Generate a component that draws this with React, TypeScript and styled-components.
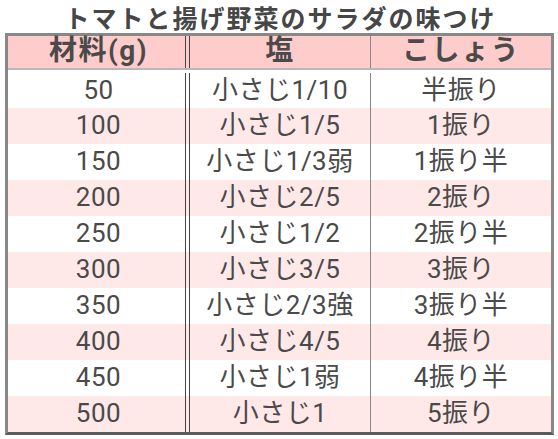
import React from 'react';
import styled, { createGlobalStyle } from 'styled-components';

const GlobalStyle = createGlobalStyle`
  * {
    box-sizing: border-box;
  }
  body {
    margin: 0;
    background: #ffffff;
    font-family: "Noto Sans CJK JP", "Noto Sans", sans-serif;
    color: #4a4a4a;
  }
`;

const Page = styled.div`
  width: 558px;
  height: 439px;
  display: flex;
  flex-direction: column;
  padding: 0 4px 0 5px;
`;

const Title = styled.h1`
  margin: 0;
  height: 33px;
  text-align: center;
  font-size: 25px;
  font-weight: 700;
  letter-spacing: 2px;
  line-height: 34px;
  padding-left: 2px;
  color: #464646;
`;

const Table = styled.div`
  display: flex;
  flex-direction: column;
  border: 3px solid #888888;
  border-bottom-color: #5a5a5a;
`;

const Row = styled.div<{ $alt?: boolean; $head?: boolean }>`
  display: grid;
  grid-template-columns: 182px 181px 1fr;
  height: ${p => (p.$head ? '33px' : '36px')};
  background: ${p => (p.$head ? '#ffcccc' : p.$alt ? '#ffe8e8' : '#ffffff')};
  border-bottom: ${p => (p.$head ? '1px solid #b8b8b8' : 'none')};

  &:nth-child(2) {
    height: 39px;
    padding-top: 3px;
    border-top: 1px solid #b8b8b8;
    box-shadow: inset 0 3px 0 #ffffff;
  }
`;

const Cell = styled.div<{ $col: number; $head?: boolean; $bg: string }>`
  display: flex;
  align-items: center;
  justify-content: center;
  font-family: Roboto, "Noto Sans CJK JP", sans-serif;
  font-size: ${p => (p.$head ? '28px' : '26px')};
  font-weight: ${p => (p.$head ? 700 : 400)};
  letter-spacing: ${p => (p.$head ? '1.5px' : '0.5px')};
  line-height: 1;
  white-space: nowrap;
  border-right: ${p =>
    p.$col === 0 ? '1px solid #444444' : p.$col === 1 ? '1px solid #888888' : 'none'};
  box-shadow: ${p =>
    p.$col === 0 ? `inset -3px 0 0 ${p.$bg}, inset -4px 0 0 #444444` : 'none'};
  padding-bottom: 2px;
`;

const rows: [string, string, string][] = [
  ['50', '小さじ1/10', '半振り'],
  ['100', '小さじ1/5', '1振り'],
  ['150', '小さじ1/3弱', '1振り半'],
  ['200', '小さじ2/5', '2振り'],
  ['250', '小さじ1/2', '2振り半'],
  ['300', '小さじ3/5', '3振り'],
  ['350', '小さじ2/3強', '3振り半'],
  ['400', '小さじ4/5', '4振り'],
  ['450', '小さじ1弱', '4振り半'],
  ['500', '小さじ1', '5振り'],
];

const head = ['材料(g)', '塩', 'こしょう'];

const App = () => {
  return (
    <>
      <GlobalStyle />
      <Page>
        <Title>トマトと揚げ野菜のサラダの味つけ</Title>
        <Table>
          <Row $head>
            {head.map((h, i) => (
              <Cell key={h} $col={i} $head $bg="#ffcccc">
                {h}
              </Cell>
            ))}
          </Row>
          {rows.map((r, idx) => {
            const alt = idx % 2 === 1;
            return (
              <Row key={r[0]} $alt={alt}>
                {r.map((v, i) => (
                  <Cell key={i} $col={i} $bg={alt ? '#ffe8e8' : '#ffffff'}>
                    {v}
                  </Cell>
                ))}
              </Row>
            );
          })}
        </Table>
      </Page>
    </>
  );
};

export default App;
